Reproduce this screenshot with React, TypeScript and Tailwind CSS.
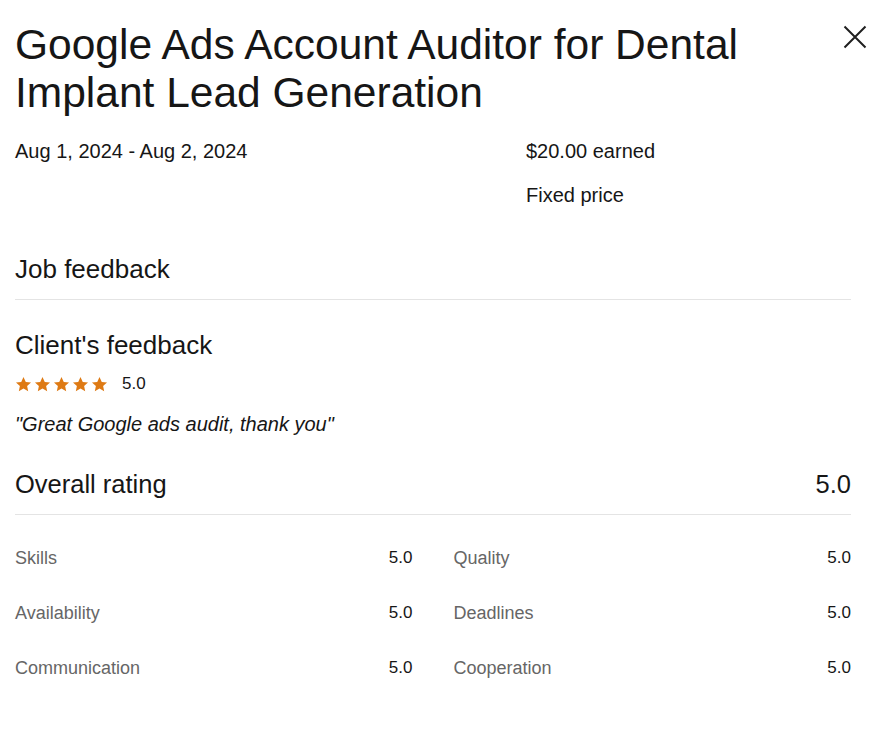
const stars = [0, 1, 2, 3, 4];

const ratings = [
  { left: "Skills", leftValue: "5.0", right: "Quality", rightValue: "5.0" },
  { left: "Availability", leftValue: "5.0", right: "Deadlines", rightValue: "5.0" },
  { left: "Communication", leftValue: "5.0", right: "Cooperation", rightValue: "5.0" },
];

const Star = () => (
  <svg width="17" height="17" viewBox="0 0 24 24" aria-hidden="true">
    <polygon
      points="12,1.5 15.2,8.3 22.6,9.1 17.1,14.1 18.6,21.5 12,17.7 5.4,21.5 6.9,14.1 1.4,9.1 8.8,8.3"
      fill="#de7a14"
    />
  </svg>
);

const CloseIcon = () => (
  <svg width="24" height="24" viewBox="0 0 24 24" aria-hidden="true">
    <path d="M1.5 1.5 L22.5 22.5 M22.5 1.5 L1.5 22.5" stroke="#1f1f1f" strokeWidth="2" fill="none" />
  </svg>
);

const App = () => {
  return (
    <div className="w-[886px] h-[733px] overflow-hidden bg-white pl-[15px] pr-[35px] text-[#161616] font-['Liberation_Sans',Arial,sans-serif]">
      <header className="flex justify-between -mr-[16px]">
        <h1 className="w-[790px] pt-[21px] text-[42.5px] leading-[48px] font-normal">
          Google Ads Account Auditor for Dental Implant Lead Generation
        </h1>
        <button className="mt-[25px] h-[24px] w-[24px]" aria-label="Close">
          <CloseIcon />
        </button>
      </header>

      <div className="mt-[20px] grid grid-cols-[511px_1fr] text-[20px] leading-[28px]">
        <div>Aug 1, 2024 - Aug 2, 2024</div>
        <div className="flex flex-col gap-[16px]">
          <span>$20.00 earned</span>
          <span>Fixed price</span>
        </div>
      </div>

      <h2 className="mt-[44px] border-b border-[#e4e4e4] pb-[14px] text-[26px] leading-[32px] font-normal">
        Job feedback
      </h2>

      <section className="mt-[29px]">
        <h3 className="text-[26px] leading-[32px] font-normal">Client's feedback</h3>
        <div className="mt-[11px] flex h-[24px] items-center gap-[2px]">
          {stars.map((s) => (
            <Star key={s} />
          ))}
          <span className="ml-[12px] text-[17px]">5.0</span>
        </div>
        <p className="mt-[14px] text-[20px] leading-[28px] italic">"Great Google ads audit, thank you"</p>
      </section>

      <div className="mt-[30px] flex justify-between border-b border-[#e4e4e4] pb-[14px] text-[25.5px] leading-[32px]">
        <span>Overall rating</span>
        <span>5.0</span>
      </div>

      <div className="mt-[31px] grid grid-cols-2 gap-x-[41px] gap-y-[31px] text-[18px] leading-[24px]">
        {ratings.map((r) => (
          <div key={r.left} className="contents">
            <div className="flex justify-between">
              <span className="text-[#666666]">{r.left}</span>
              <span className="text-[17px]">{r.leftValue}</span>
            </div>
            <div className="flex justify-between">
              <span className="text-[#666666]">{r.right}</span>
              <span className="text-[17px]">{r.rightValue}</span>
            </div>
          </div>
        ))}
      </div>
    </div>
  );
};

export default App;
